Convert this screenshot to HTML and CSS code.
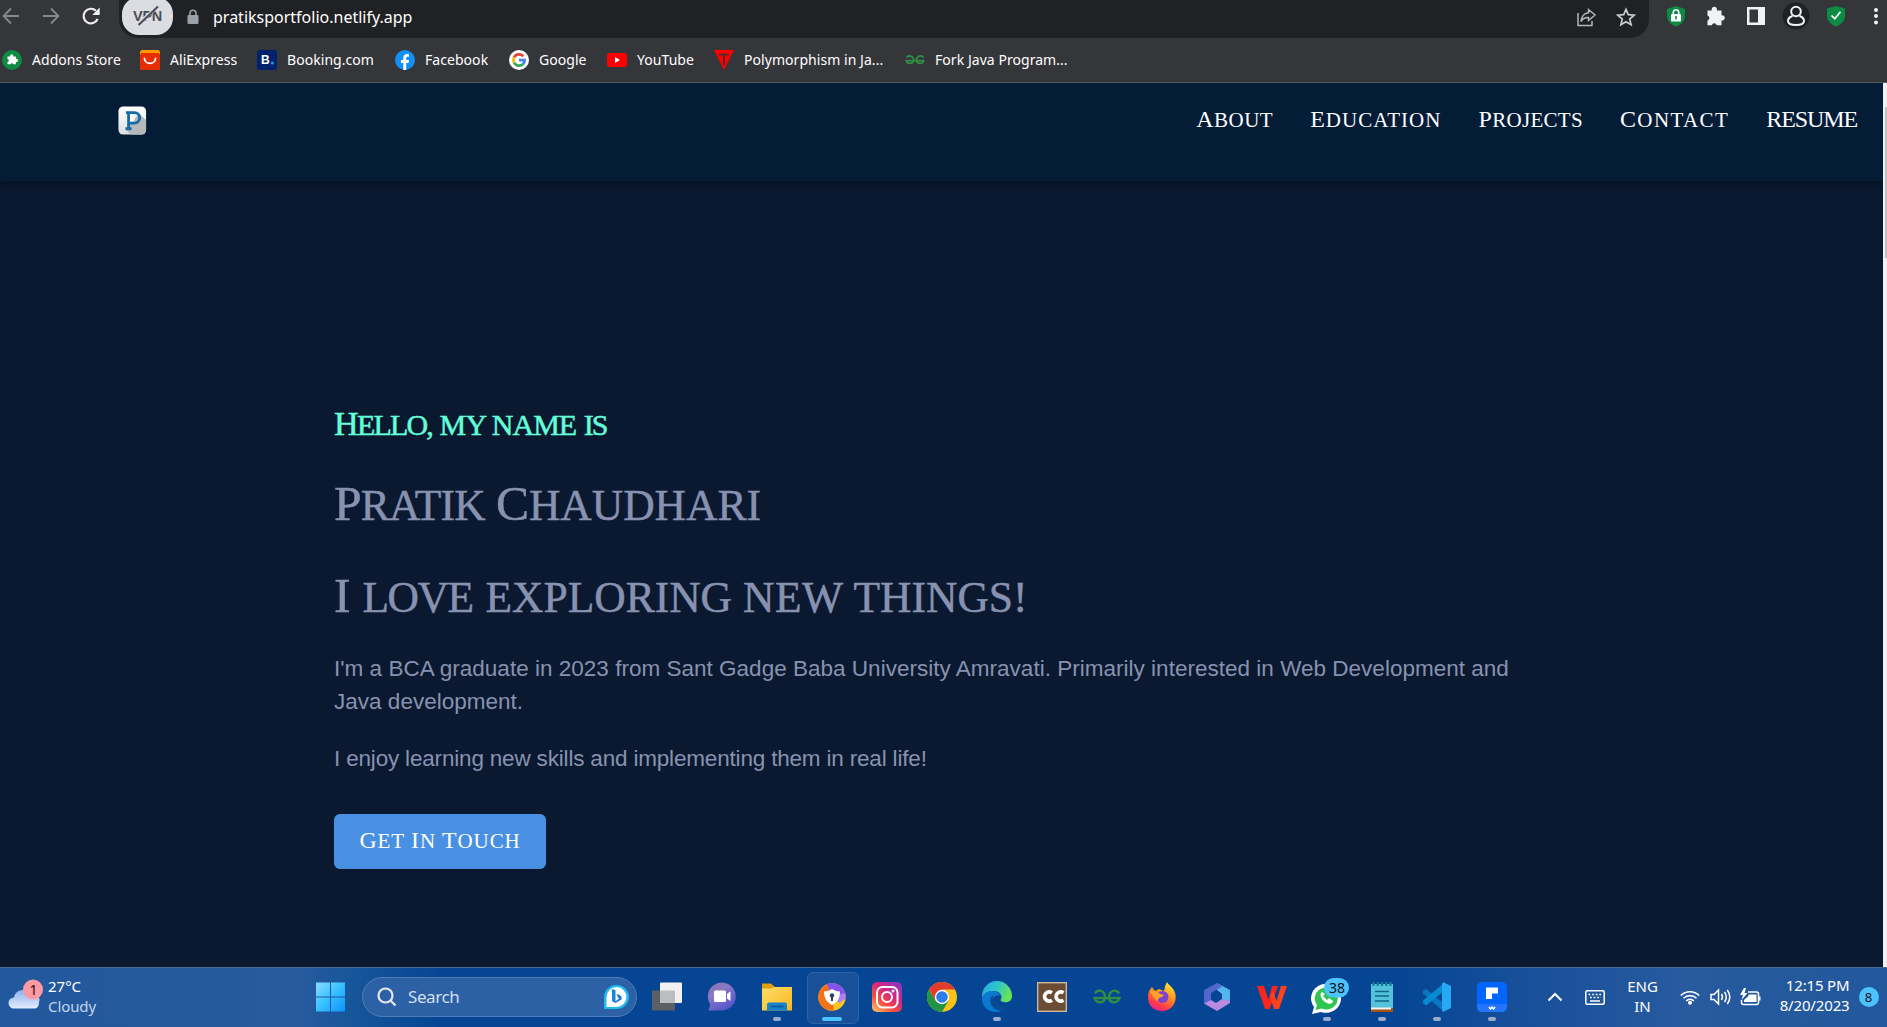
FILE: index.html
```html
<!DOCTYPE html>
<html lang="en">
<head>
<meta charset="utf-8">
<title>Pratik Chaudhari</title>
<link rel="stylesheet" href="styles.css">
</head>
<body>
<div class="screen">
  <header class="browser">
    <div class="toolbar">
      <div class="nav-buttons">
        <svg width="20" height="20" viewBox="0 0 20 20" fill="none" stroke="#88898c" stroke-width="1.8"><path d="M18 10H3M10 2.5 2.6 10l7.4 7.5"/></svg>
        <svg width="20" height="20" viewBox="0 0 20 20" fill="none" stroke="#88898c" stroke-width="1.8"><path d="M2 10h15M10 2.5l7.4 7.5-7.4 7.5"/></svg>
        <svg width="20" height="20" viewBox="0 0 20 20"><path d="M16.6 13A7.3 7.3 0 1 1 15 4.8" fill="none" stroke="#f1f1f2" stroke-width="2.2"/><path d="M18.7 1.500v7.400h-7.400z" fill="#f1f1f2"/></svg>
      </div>
      <div class="omnibox">
        <div class="vpn"><span>VPN</span><svg width="30" height="24" viewBox="0 0 30 24"><path d="M6 19.500 23 4" stroke="#dcdde2" stroke-width="3.500"/><path d="M5.500 21 25 2.500" stroke="#4b4c53" stroke-width="2"/></svg></div>
        <svg class="lock" width="12" height="16" viewBox="0 0 12 16"><rect x=".5" y="6" width="11" height="9" rx="1" fill="#9aa0a6"/><path d="M3 7V4.300a3 3 0 0 1 6 0V7" fill="none" stroke="#9aa0a6" stroke-width="1.600"/></svg>
        <span class="url">pratiksportfolio.netlify.app</span>
        <div class="omni-actions">
          <svg width="20" height="20" viewBox="0 0 20 20" fill="none" stroke="#b4b5b8" stroke-width="1.500"><path d="M2 6v12.500h14V14"/><path d="M12.500 2.500 19 8l-6.500 5.500V10.500C9 10.300 6.500 12 5 14.500 5.500 9.500 8.500 6 12.500 5.700z"/></svg>
          <svg width="20" height="20" viewBox="0 0 20 20" fill="none" stroke="#c9cacc" stroke-width="1.700"><path d="M10 2.300l2.300 5.400 5.900.5-4.500 3.900 1.400 5.700-5.100-3-5.100 3 1.400-5.700-4.500-3.900 5.900-.5z"/></svg>
        </div>
      </div>
      <div class="extensions">
        <svg width="20" height="22" viewBox="0 0 20 22"><path d="M10 1l9 3v7c0 5-4 8.500-9 10.500C5 19.500 1 16 1 11V4z" fill="#0d8a43"/><rect x="5" y="9" width="10" height="7.500" rx="1" fill="#fff"/><path d="M7.300 10V7.500a2.700 2.700 0 0 1 5.400 0v2.500" fill="none" stroke="#fff" stroke-width="1.600"/><path d="M10 11v3.500" stroke="#0d8a43" stroke-width="1.600"/></svg>
        <svg width="20" height="22" viewBox="0 0 20 22"><path d="M1.500 5.500h4.300a2.700 2.700 0 1 1 5 0h4.700v4.800a2.600 2.600 0 1 1 0 5v4.900h-4.700a2.600 2.600 0 0 0-5 0H1.500v-4.700a2.600 2.600 0 0 0 0-5z" fill="#f1f2f4"/></svg>
        <svg width="20" height="22" viewBox="0 0 20 22"><path d="M1 2h18v18H1z" fill="#f1f2f4"/><path d="M3.500 4.500H12v13H3.500z" fill="#35363a"/></svg>
        <svg width="28" height="28" viewBox="0 0 28 28"><circle cx="14" cy="14" r="13.500" fill="#202124"/><g fill="none" stroke="#f1f2f4" stroke-width="2"><circle cx="14" cy="9.500" r="4.800"/><path d="M10.500 14C7.500 15 6 17 6 19c0 2.500 3.500 4 8 4s8-1.500 8-4c0-2-1.500-4-4.500-5"/></g></svg>
        <svg width="20" height="22" viewBox="0 0 20 22"><path d="M10 1l9 2.500v7.500c0 5-4 8.500-9 10.500C5 19.500 1 16 1 11V3.500z" fill="#0d8a43"/><path d="M5.500 10.500l3.300 3.200 5.700-7" fill="none" stroke="#fff" stroke-width="1.700"/></svg>
        <svg width="4" height="20" viewBox="0 0 4 20" fill="#f1f2f4"><circle cx="2" cy="4" r="2"/><circle cx="2" cy="10" r="2"/><circle cx="2" cy="16.500" r="2"/></svg>
      </div>
    </div>
    <div class="bookmarks">
      <a class="bm addons"><svg width="20" height="20" viewBox="0 0 20 20"><circle cx="10" cy="10" r="10" fill="#0d8a43"/><path d="M5.500 6.500h2.700a1.600 1.600 0 1 1 3 0h2.700v2.500a1.500 1.500 0 1 1 0 2.800v2.500h-2.700a1.400 1.400 0 0 0-2.700 0h-3V12a1.400 1.400 0 0 0 0-2.800z" fill="#fff"/></svg><span>Addons Store</span></a>
      <a class="bm ali"><svg width="20" height="20" viewBox="0 0 20 20"><rect width="20" height="20" rx="2.500" fill="#ff9a00"/><path d="M0 5l1-2h18l1 2v12.500a2.500 2.500 0 0 1-2.500 2.500h-15A2.500 2.500 0 0 1 0 17.500z" fill="#e62e04"/><path d="M4.500 8.500c.5 6.500 10.500 6.500 11 0" fill="none" stroke="#fff" stroke-width="1.800" stroke-linecap="round"/></svg><span>AliExpress</span></a>
      <a class="bm booking"><svg width="20" height="20" viewBox="0 0 20 20"><rect width="20" height="20" rx="2.500" fill="#00226c"/><text x="4" y="14" class="b-letter">B</text><circle cx="15.300" cy="13" r="1.500" fill="#18a3e8"/></svg><span>Booking.com</span></a>
      <a class="bm facebook"><svg width="20" height="20" viewBox="0 0 20 20"><circle cx="10" cy="10" r="10" fill="#1290f5"/><path d="M8.300 20v-7H6v-3h2.300V8c0-2.800 1.500-4 4-4l1.700.2v2.500h-1.300c-1.200 0-1.500.6-1.500 1.500V10H14l-.5 3h-2.300v7z" fill="#fff"/></svg><span>Facebook</span></a>
      <a class="bm google"><svg width="20" height="20" viewBox="0 0 20 20"><circle cx="10" cy="10" r="10" fill="#fff"/><g fill="none" stroke-width="2.800"><path d="M14.200 6.200A5.700 5.700 0 0 0 5 7.300" stroke="#ea4335"/><path d="M5 7.300a5.700 5.700 0 0 0 0 5.400" stroke="#fbbc05"/><path d="M5 12.700a5.700 5.700 0 0 0 8.800 1.500" stroke="#34a853"/><path d="M13.800 14.200a5.500 5.500 0 0 0 1.800-4H10" stroke="#4285f4"/></g></svg><span>Google</span></a>
      <a class="bm youtube"><svg width="20" height="20" viewBox="0 0 20 20"><rect y="3" width="20" height="14" rx="3" fill="#f00"/><path d="M8 7l5 3-5 3z" fill="#fff"/></svg><span>YouTube</span></a>
      <a class="bm poly"><svg width="20" height="20" viewBox="0 0 20 20"><path d="M0 0h20L10 20z" fill="#f00"/><path d="M5 4.500h10M10 4v11" stroke="#54292d" stroke-width="2"/></svg><span>Polymorphism in Ja...</span></a>
      <a class="bm fork"><svg width="20" height="20" viewBox="0 0 28 20"><g fill="none" stroke="#2f8d46" stroke-width="2.500"><path d="M2 6.500C4 3 12 4 12 10s-9 6-10 1h24c-1 5-10 5-10-1S24 3 26 6.500"/></g></svg><span>Fork Java Program...</span></a>
    </div>
  </header>

  <div class="viewport">
    <main class="page">
      <nav class="site-nav">
        <svg class="logo" width="29" height="29" viewBox="0 0 30 31"><defs><linearGradient id="lg" x1="0" y1="0" x2="0" y2="1"><stop offset="0" stop-color="#fff"/><stop offset="1" stop-color="#dcdfe2"/></linearGradient></defs><rect width="29.500" height="30" rx="5" y=".5" fill="url(#lg)"/><path d="M22 8l7.500 7v11a4.500 4.500 0 0 1-4.500 4.500H13L8 25z" fill="#b6b8ba"/><path d="M12 8.500h5v8h-5z" fill="#fff"/><path d="M8 7h9a5.500 5.500 0 0 1 0 11.300h-5M10.800 7v17.300M7.500 24.300h6.500" fill="none" stroke="#176ba7" stroke-width="3"/></svg>
        <div class="links">
          <a class="cap about">About</a>
          <a class="cap education">Education</a>
          <a class="cap projects">Projects</a>
          <a class="cap contact">Contact</a>
          <a class="cap resume">RESUME</a>
        </div>
      </nav>
      <section class="hero">
        <h1 class="hello"><span class="cap hello-a">Hello,</span><span class="my">my</span><span class="name">name</span><span class="is">is</span></h1>
        <h2 class="big who"><span class="cap pratik">Pratik</span><span class="cap chaudhari">Chaudhari</span></h2>
        <h2 class="big love"><span class="cap i">I</span><span class="w-love">love</span><span class="w-exploring">exploring</span><span class="w-new">new</span><span class="w-things">things!</span></h2>
        <p class="bio">I'm a BCA graduate in 2023 from Sant Gadge Baba University Amravati. Primarily interested in Web Development and<br>Java development.</p>
        <p class="bio enjoy">I enjoy learning new skills and implementing them in real life!</p>
        <a class="touch"><span class="cap">Get</span><span class="cap">In</span><span class="cap">Touch</span></a>
      </section>
    </main>
    <div class="scrollbar"><div class="thumb"></div></div>
  </div>

  <footer class="taskbar">
    <div class="weather">
      <svg width="42" height="36" viewBox="0 0 42 36"><defs><linearGradient id="cl" x1="0" y1="0" x2="0" y2="1"><stop offset="0" stop-color="#8fb0f0"/><stop offset="1" stop-color="#e3ecfb"/></linearGradient></defs><path d="M14 28.500a5.500 5.500 0 0 1 0-11A9 9 0 0 1 30 13.500a7 7 0 0 1 9 9q0 6-5 6z" fill="url(#cl)"/><circle cx="33" cy="9.500" r="10" fill="#ff99a4"/><text x="29.500" y="14.500" class="badge-text">1</text></svg>
      <div class="weather-text"><span class="temp">27°C</span><span class="sky">Cloudy</span></div>
    </div>
    <svg class="start" width="30" height="30" viewBox="0 0 30 30"><defs><linearGradient id="wn" x1="0" y1="0" x2="1" y2="1"><stop offset="0" stop-color="#87deff"/><stop offset=".5" stop-color="#37c0ff"/><stop offset="1" stop-color="#0a94fb"/></linearGradient></defs><path d="M0 .5h14v14H0zM15 .5h14v14H15zM0 15.500h14v14H0zM15 15.500h14v14H15z" fill="url(#wn)"/></svg>
    <div class="search">
      <svg width="20" height="20" viewBox="0 0 20 20" fill="none" stroke="#e6e8eb" stroke-width="2.200"><circle cx="8.500" cy="8.500" r="7"/><path d="M13.500 13.500l5 5"/></svg>
      <span>Search</span>
      <svg class="bing" width="26" height="26" viewBox="0 0 26 26"><path d="M1 25V13A12.500 12 0 1 1 13 25z" fill="#21b8ee"/><path d="M3.500 23V13a10 10 0 1 1 9.500 10z" fill="#fff"/><path d="M9 5l3.500 1.300v12.200L9 17z" fill="#1688d8"/><path d="M9 17l3.500 2 6-3.500c1-3-1-4.500-5-5.500l1.500 3.500 1.500.7-4 3z" fill="#1a74d4"/></svg>
    </div>
    <div class="apps">
      <div class="app"><svg width="30" height="30" viewBox="0 0 30 30"><rect y="8.500" width="23" height="20" rx="1" fill="#5c5f64"/><rect x="8" y=".5" width="22" height="20.500" rx="1" fill="#f1f1f2"/><path d="M8 8.500h15v12.500H8z" fill="#bcbdbf"/></svg></div>
      <div class="app"><svg width="30" height="30" viewBox="0 0 30 30"><defs><linearGradient id="ch" x1="0" y1="0" x2=".6" y2="1"><stop offset="0" stop-color="#8570ad"/><stop offset=".4" stop-color="#8c79c5"/><stop offset="1" stop-color="#5655cc"/></linearGradient></defs><path d="M1.500 28.500l1.800-6A14 14 0 1 1 15 28.500z" fill="url(#ch)"/><rect x="7" y="8.500" width="12" height="11.500" rx="1.500" fill="#fff"/><path d="M20 12l3.500-2.500v9.500L20 16.500z" fill="#fff"/></svg></div>
      <div class="app run"><svg width="30" height="30" viewBox="0 0 30 30"><defs><linearGradient id="fo" x1="0" y1="0" x2="1" y2="1"><stop offset="0" stop-color="#ffdc6c"/><stop offset="1" stop-color="#f6b91c"/></linearGradient></defs><path d="M0 1.500h9l3.500 3V10H0z" fill="#dea006"/><path d="M0 6.500h9l3-1.500h18v23.500H0z" fill="url(#fo)"/><path d="M5 28.500v-6q0-2 2-2h16q2 0 2 2v6z" fill="#1583cb"/><path d="M9 24.500h12.500" stroke="#065696" stroke-width="1.500"/></svg></div>
      <div class="app active"><svg width="30" height="30" viewBox="0 0 30 30"><circle cx="15" cy="15" r="13.700" fill="#f8c723"/><path d="M15 15L9 2.500A13.700 13.700 0 0 1 28.500 17z" fill="#8752f2"/><path d="M15 15L28 11l.7 5-6 5z" fill="#ab82f4"/><path d="M15 15l2 13.600A13.700 13.700 0 0 1 10 2.300z" fill="#f47316"/><path d="M15 7q4 2.500 8 2.500c0 7-3 11-8 13.500-5-2.500-8-6.500-8-13.500q4 0 8-2.500z" fill="#fff"/><circle cx="15" cy="13.500" r="2.200" fill="#33405b"/><path d="M14 14h2v5h-2z" fill="#33405b"/></svg></div>
      <div class="app"><svg width="30" height="30" viewBox="0 0 30 30"><defs><linearGradient id="ig" x1="0" y1="1" x2=".8" y2="0"><stop offset="0" stop-color="#ffd269"/><stop offset=".35" stop-color="#f7503c"/><stop offset=".65" stop-color="#d6287d"/><stop offset="1" stop-color="#8f35bf"/></linearGradient></defs><rect width="30" height="30" rx="5" fill="url(#ig)"/><g fill="none" stroke="#fff" stroke-width="2"><rect x="5" y="5" width="20.500" height="20.500" rx="5.500"/><circle cx="15" cy="15" r="5"/></g><circle cx="21" cy="9" r="1.500" fill="#fff"/></svg></div>
      <div class="app"><svg width="30" height="30" viewBox="0 0 30 30"><circle cx="15" cy="15" r="15" fill="#fbc116"/><path d="M2 7.500A15 15 0 0 1 28 7.500H15L8.500 18.700z" fill="#e33b2e"/><path d="M2 7.500l6.500 11.200 13 0L15 30A15 15 0 0 1 2 7.500z" fill="#219447"/><circle cx="15" cy="15" r="7.200" fill="#fff"/><circle cx="15" cy="15" r="5.800" fill="#2c7ce9"/></svg></div>
      <div class="app run"><svg width="30" height="30" viewBox="0 0 30 30"><defs><linearGradient id="ed" x1="0" y1="0" x2="1" y2=".4"><stop offset="0" stop-color="#2aa5e6"/><stop offset=".5" stop-color="#2dc3ce"/><stop offset="1" stop-color="#65e45b"/></linearGradient></defs><path d="M0 14A15 15 0 0 1 30 14c0 5-4 7-8 6-4-.5-4-2-2.500-4C20 12 16 8.500 11 9 5 9 1 12 0 17z" fill="url(#ed)"/><path d="M0 16C2 8 15 6 19 14c-4-2-8 0-8 5 0 4 4 8 9 10C9 33-1 25 0 16z" fill="#0b79d0"/><path d="M11 13c-5 4-3 12 4 15 5 2 10-1 12-5-5 2-16 2-16-10z" fill="#0a4b93"/></svg></div>
      <div class="app"><svg width="30" height="30" viewBox="0 0 30 30"><rect x=".7" y=".7" width="28.600" height="28.600" fill="#6b4c35" stroke="#d3b79a" stroke-width="1.400"/><g fill="none" stroke="#fff" stroke-width="3.600"><path d="M15 10.800a4.800 4.500 0 1 0 0 7.500M26.500 10.800a4.800 4.500 0 1 0 0 7.500"/></g></svg></div>
      <div class="app"><svg width="28" height="20" viewBox="0 0 28 20"><path d="M2 6.500C4 2 12 3 12 10s-9 6.500-10.500 1h25C25 16.500 16 17 16 10S24 2 26 6.500" fill="none" stroke="#2f8d46" stroke-width="2.400"/></svg></div>
      <div class="app"><svg width="30" height="30" viewBox="0 0 30 30"><defs><linearGradient id="fx" x1=".8" y1="0" x2=".3" y2="1"><stop offset="0" stop-color="#fff13f"/><stop offset=".4" stop-color="#ff9a1b"/><stop offset=".8" stop-color="#ff3849"/><stop offset="1" stop-color="#e6209a"/></linearGradient></defs><path d="M20 0c2 4 8 6 8.700 14C29 23 23 29 15 29S1 24 1 15c0-4 1-7 4-10l3 4 4-2 5 2q1-6 3-9z" fill="url(#fx)"/><circle cx="15.500" cy="15" r="6" fill="#7b42d2"/><path d="M3 9c5-1 8 1 10 3l4 1c-1 2-4 2-5 3-2 2 0 3-1 3-3-1-6-6-8-10z" fill="#ffa22a"/></svg></div>
      <div class="app"><svg width="30" height="30" viewBox="0 0 30 30"><path d="M15 1l13 7v13l-8-4v-5l-5-4z" fill="#54b4ee"/><path d="M15 1L2 8v13.500l7 2.500 3-2-3-3v-8l11-6.500z" fill="#5266cc"/><path d="M2 21.500L15 29l13-8v-2l-8-2-6 4-5-3z" fill="#b88be0"/></svg></div>
      <div class="app"><svg width="30" height="30" viewBox="0 0 30 30"><path d="M0 4h7l4.500 14L15 4h6L12.500 27H8z" fill="#fb251b"/><path d="M24 4h6l-8 23h-5L13 14l3-5 3.500 10z" fill="#ff431c"/></svg></div>
      <div class="app run"><svg width="44" height="36" viewBox="0 0 44 36"><path d="M7 35l2-7A15 14.500 0 1 1 16 33z" fill="#fff"/><path d="M10.500 31l1.500-5A11.500 11 0 1 1 16.500 29.500z" fill="#30c552"/><path d="M17 13c-3 2-1 7 3 10s8 2 8-1l-4-3-2 2-4-4 2-2z" fill="#fff"/><rect x="19" y="-1" width="25" height="19.500" rx="9.700" fill="#4cc2ff"/><text x="24" y="14" class="badge-text">38</text></svg></div>
      <div class="app run"><svg width="24" height="30" viewBox="0 0 24 30"><rect x="1" y="2" width="22" height="24" fill="#54c2da"/><path d="M1 26h22v4H1z" fill="#a5530f"/><path d="M1 25.500h20v2H1z" fill="#f2f2f2"/><path d="M5 9.500h14M5 14h14M5 19h14" stroke="#0d6787" stroke-width="1.600"/><path d="M3.500 0v4M7.800 0v4M12 0v4M16.300 0v4M20.500 0v4" stroke="#167d95" stroke-width="2.200"/></svg></div>
      <div class="app run"><svg width="30" height="30" viewBox="0 0 30 30"><path d="M1 9l3-2 17 14v8L1 11.500z" fill="#0878c3"/><path d="M1 21l3 2.500L22 9V1L1 18.500z" fill="#078ad2"/><path d="M21 0l8 4v22l-8 4-1-2V3z" fill="#26a9f2"/></svg></div>
      <div class="app run"><svg width="30" height="30" viewBox="0 0 30 30"><rect width="30" height="30" rx="5" fill="#0066ff"/><path d="M0 22h30v3a5 5 0 0 1-5 5H5a5 5 0 0 1-5-5z" fill="#2374ff"/><path d="M9 17V5.500h12v6h-6V17z" fill="#fff"/><path d="M12 25l1.500 2 1.500-2 1.500 2 1.500-2" stroke="#fff" stroke-width="1.600" fill="none"/></svg></div>
    </div>
    <div class="tray">
      <svg width="16" height="10" viewBox="0 0 16 10" fill="none" stroke="#fff" stroke-width="2"><path d="M1.500 8.500L8 2l6.500 6.500"/></svg>
      <svg class="keyboard" width="20" height="15" viewBox="0 0 20 15"><rect x=".8" y=".8" width="18.400" height="13.400" rx="1.500" fill="none" stroke="#fff" stroke-width="1.500"/><path d="M3.500 4.500h13M5 7.500h11" stroke="#fff" stroke-width="1.600" stroke-dasharray="1.800 1.800"/><path d="M5 11h10" stroke="#fff" stroke-width="1.500"/></svg>
      <div class="lang"><span>ENG</span><span>IN</span></div>
      <svg class="wifi" width="20" height="16" viewBox="0 0 20 16" fill="none" stroke="#fff" stroke-width="1.600"><path d="M.8 6.500a13 13 0 0 1 18.400 0M3.500 9.300a9.200 9.200 0 0 1 13 0M6.200 11.900a5.500 5.500 0 0 1 7.600 0"/><circle cx="10" cy="13.800" r="1.200" fill="#fff"/></svg>
      <svg class="volume" width="21" height="18" viewBox="0 0 21 18" fill="none" stroke="#fff" stroke-width="1.500"><path d="M1 6.500h3L8.500 2v14L4 11.500H1z"/><path d="M11.500 6q2 3 0 6M14.500 4q3.500 5 0 10M17.300 2q5 7 0 14"/></svg>
      <svg class="battery" width="21" height="18" viewBox="0 0 21 18"><path d="M8 4h8.500q2 0 2 2v8.500q0 2-2 2h-13q-2 0-2-2V12" fill="none" stroke="#fff" stroke-width="1.500"/><path d="M8.500 6.500h8v7.500H4v-2l4.500-4z" fill="#fff"/><path d="M19.500 8.500v4" stroke="#fff" stroke-width="2"/><path d="M4 0L0 7h3L1.500 12 7.500 5H4.500L6 0z" fill="#fff"/></svg>
      <div class="clock"><span class="time">12:15 PM</span><span class="date">8/20/2023</span></div>
      <div class="count">8</div>
    </div>
  </footer>
</div>
</body>
</html>
```
FILE: styles.css
```css
* { box-sizing: border-box; }
body { margin: 0; overflow: hidden; background: #0a192f; }
svg { display: block; flex: none; overflow: visible; }
.screen { width: 1887px; height: 1027px; display: flex; flex-direction: column; overflow: hidden; }

/* Browser chrome */
.browser { height: 83px; flex: none; background: #35363a; border-bottom: 1px solid #5d6063; color: #fff; font-family: "Noto Sans", sans-serif; }
.toolbar { height: 38px; display: flex; }
.nav-buttons { width: 119px; display: flex; gap: 20px; padding: 6px 0 0 1px; }
.omnibox { width: 1530px; height: 38px; background: #202124; border-radius: 0 0 19px 19px; display: flex; align-items: flex-start; }
.vpn { width: 51px; height: 38px; margin: -3px 0 0 3px; border-radius: 17px; background: #dcdde2; color: #4b4c53; display: grid; place-items: center; font: bold 14.500px "Liberation Sans", sans-serif; letter-spacing: -.3px; }
.vpn > * { grid-area: 1 / 1; }
.lock { margin: 9px 0 0 14px; }
.url { margin: 4px 0 0 14px; font-size: 16px; line-height: 26px; white-space: nowrap; }
.omni-actions { display: flex; gap: 20px; margin: 7px 13px 0 auto; }
.extensions { display: flex; margin-left: 17px; padding-top: 5px; gap: 20px; }
.extensions svg:nth-child(4) { margin: -3px -4px 0; }
.extensions svg:nth-child(6) { margin: 1px 0 0 8px; }
.bookmarks { height: 44px; display: grid; grid-template-columns: 138px 117px 138px 114px 98px 107px 191px auto; padding-left: 2px; align-items: center; }
.bm { display: flex; align-items: center; gap: 10px; font-size: 14px; line-height: 20px; white-space: nowrap; }
.bm span { letter-spacing: .05px; }
.b-letter { font: bold 12px "Liberation Sans", sans-serif; fill: #fff; }

/* Portfolio page */
.viewport { height: 884px; display: flex; flex: none; }
.page { width: 1883px; background: #0a192f; }
.site-nav { height: 98px; background: #041c36; box-shadow: 0 4px 5px rgba(4, 16, 28, .5); display: flex; justify-content: space-between; padding: 23px 26px 0 118px; color: #fff; }
.links { display: flex; gap: 37px; margin-top: -1px; font: 21px/28px "Liberation Serif", serif; }
.cap { display: inline-block; white-space: nowrap; text-transform: uppercase; }
.cap::first-letter { font-size: 1.14em; }
.about { letter-spacing: .5px; }
.education { letter-spacing: 1.050px; }
.projects { letter-spacing: .3px; }
.contact { letter-spacing: 1.400px; }
.resume { font-size: 24px; letter-spacing: -1.100px; }
.resume::first-letter { font-size: 1em; }
.hero { width: 1250px; padding: 213px 0 0 334px; color: #8892b0; }
.hero h1, .hero h2 { margin: 0; font-family: "Liberation Serif", serif; font-weight: 400; text-transform: uppercase; white-space: nowrap; display: flex; align-items: baseline; -webkit-text-stroke: .5px currentColor; }
.hello { height: 64px; color: #64ffda; font-size: 30px; line-height: 60px; gap: 9px; }
.hello-a { letter-spacing: -1.800px; }
.my { letter-spacing: -.8px; margin-left: -1.500px; }
.name { letter-spacing: -1px; margin-left: -3.500px; }
.is { letter-spacing: -2px; margin-left: -1.500px; }
.big { height: 92px; font-size: 43.500px; line-height: 92px; gap: 12px; }
.pratik { letter-spacing: -.8px; margin-right: -1px; }
.w-love { letter-spacing: -1.500px; margin-right: 1px; }
.w-new { letter-spacing: .5px; margin: 0 -2px 0 -1px; }
.bio { margin: 0; font: 22.500px/33px "Liberation Sans", sans-serif; letter-spacing: .015px; white-space: nowrap; }
.love + .bio { margin-top: 10px; }
.enjoy { margin-top: 24px; letter-spacing: -.18px; }
.touch { margin-top: 39px; width: 212px; height: 55px; border-radius: 6px; background: #4a90e2; color: #fff; display: flex; align-items: baseline; justify-content: center; gap: 6px; font: 21px/53px "Liberation Serif", serif; letter-spacing: .9px; }
.scrollbar { width: 4px; background: #f1f1f1; padding: 24px 0 0 2px; }
.thumb { height: 151px; background: #c1c1c1; }

/* Taskbar */
.taskbar { height: 60px; flex: none; display: flex; align-items: center; border-top: 1px solid #4b6a8d; padding-bottom: 1px; background: linear-gradient(90deg, #22589d 0, #275a9f 300px, #17569a 350px, #054593 440px, #054593 1400px, #174f9a 1520px, #275a9f 1680px, #22589d 100%); color: #fff; font: 15px/20px "Noto Sans", sans-serif; }
.weather { width: 316px; display: flex; }
.weather svg { margin-top: 1px; }
.weather-text { display: flex; flex-direction: column; margin: -3px 0 0 6px; }
.sky { color: #c5d5e9; letter-spacing: -.1px; }
.badge-text { font: 14px "Noto Sans", sans-serif; fill: #111; }
.search { width: 275px; height: 40px; margin: -1px 0 0 16px; border: 1px solid #4f7cb5; border-radius: 20px; background: #2d61a5; display: flex; align-items: center; padding: 0 7px 0 14px; font-size: 17px; color: #d3dfef; }
.search span { margin-left: 11px; letter-spacing: -.4px; }
.bing { margin-left: auto; }
.apps { display: flex; margin-left: 2.500px; height: 58px; }
.app { width: 55px; height: 58px; display: grid; place-items: center; position: relative; }
.app svg { position: relative; }
.active::before { content: ""; position: absolute; left: 2px; top: 4px; width: 50px; height: 50px; border: 1px solid #2c62a6; border-radius: 6px; background: #18519a; }
.run::after, .active::after { content: ""; position: absolute; bottom: 5px; left: 23.500px; width: 8px; height: 4px; border-radius: 2px; background: #9aaccc; }
.active::after { left: 17.500px; width: 20px; background: #4cc2ff; }
.tray { display: flex; align-items: center; margin-left: 27px; }
.keyboard { margin-left: 22px; }
.lang { margin: -3px 0 0 22px; width: 32px; display: flex; flex-direction: column; align-items: center; }
.wifi { margin-left: 21px; }
.volume { margin-left: 10px; }
.battery { margin-left: 9px; }
.clock { width: 76px; margin: -5px 0 0 13px; display: flex; flex-direction: column; align-items: flex-end; white-space: nowrap; letter-spacing: -.15px; }
.count { width: 20px; height: 20px; margin: -1px 0 0 9px; border-radius: 50%; background: #4cc2ff; color: #111; text-align: center; font-size: 13px; }
```
